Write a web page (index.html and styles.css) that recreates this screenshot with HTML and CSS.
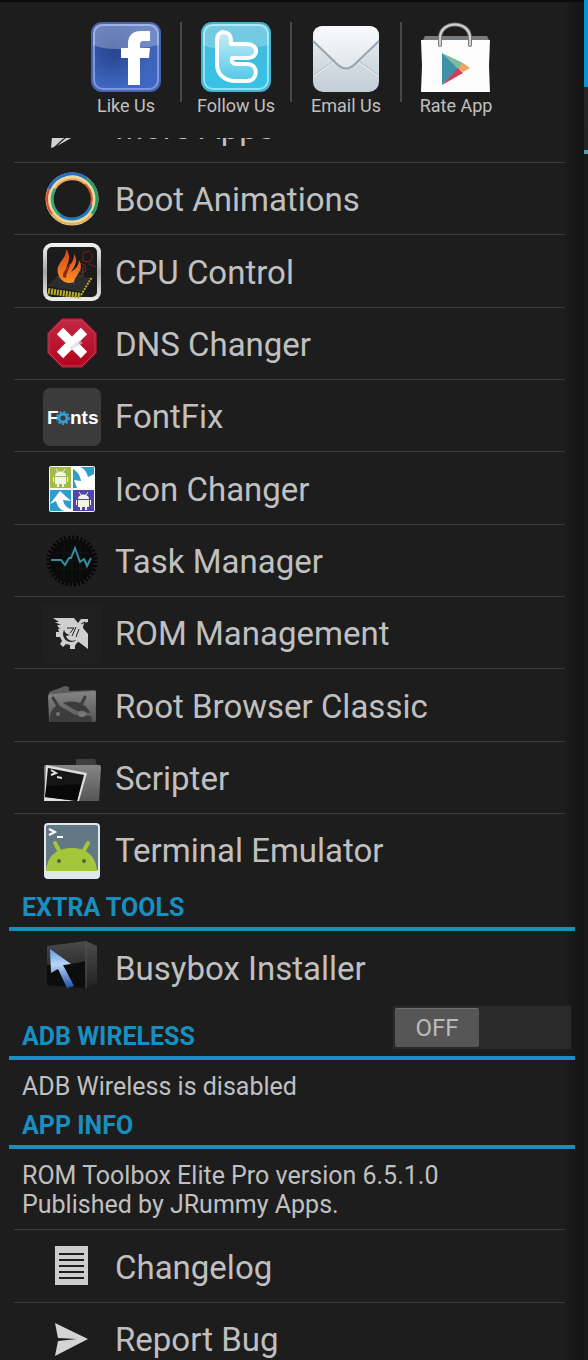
FILE: index.html
```html
<!DOCTYPE html>
<html lang="en">
<head>
  <meta charset="UTF-8">
  <meta name="viewport" content="width=device-width, initial-scale=1.0">
  <title>ROM Toolbox</title>
  <link rel="stylesheet" href="styles.css">
</head>
<body>
  <div class="drawer">
    <nav class="social">
      <a href="#like">
        <svg viewBox="0 0 72 72">
          <defs>
            <linearGradient id="fb" x1="0" y1="0" x2="0" y2="1"><stop offset="0" stop-color="#3d5fae"/><stop offset="1" stop-color="#3f68c4"/></linearGradient>
            <radialGradient id="fbDark" cx=".3" cy=".4" r=".6"><stop offset="0" stop-color="#27458f"/><stop offset="1" stop-color="#27458f" stop-opacity="0"/></radialGradient>
          </defs>
          <rect x="1" y="0" width="70" height="70" rx="11" fill="#4664ae"/>
          <rect x="4" y="3" width="64" height="64" rx="9" fill="url(#fb)" stroke="#7c98da" stroke-width="2"/>
          <rect x="5" y="4" width="62" height="62" rx="7" fill="url(#fbDark)"/>
          <path d="M3 11Q3 2 12 2H60Q69 2 69 11V23Q46 28 26 27Q12 27 3 23Z" fill="#fff" opacity=".27"/>
          <path d="M38 63V36H31V26H38V22C38 13 43 9 51 9H60V19H54C51 19 50 20 50 23V26H60L59 36H50V63Z" fill="#fff"/>
        </svg>
        Like Us
      </a>
      <a href="#follow">
        <svg viewBox="0 0 72 72">
          <defs>
            <linearGradient id="tw" x1="0" y1="0" x2="0" y2="1"><stop offset="0" stop-color="#49b8d6"/><stop offset="1" stop-color="#35c3e6"/></linearGradient>
            <linearGradient id="twT" x1="0" y1="0" x2="0" y2="1"><stop offset="0" stop-color="#c8edf8"/><stop offset="1" stop-color="#52c8e8"/></linearGradient>
          </defs>
          <rect x="1" y="0" width="70" height="70" rx="11" fill="#45b3cf"/>
          <rect x="4" y="3" width="64" height="64" rx="9" fill="url(#tw)" stroke="#8fe3f5" stroke-width="2"/>
          <path d="M3 11Q3 2 12 2H60Q69 2 69 11V23Q46 28 26 27Q12 27 3 23Z" fill="#fff" opacity=".25"/>
          <path d="M17 18C17 7 31 8 31 18V22H47C59 22 59 36 48 36H32C31 40 33 42 37 42H48C59 43 58 59 47 59H36C24 59 17 52 17 42Z" fill="url(#twT)" stroke="#fff" stroke-width="4" stroke-linejoin="round"/>
        </svg>
        Follow Us
      </a>
      <a href="#email">
        <svg viewBox="0 0 72 72">
          <defs>
            <linearGradient id="mail" x1="0" y1="0" x2="0" y2="1"><stop offset="0" stop-color="#e9eef3"/><stop offset="1" stop-color="#c4ced6"/></linearGradient>
            <linearGradient id="flap" x1="0" y1="0" x2="0" y2="1"><stop offset="0" stop-color="#fafbfd"/><stop offset="1" stop-color="#dfe6ec"/></linearGradient>
          </defs>
          <rect x="3" y="4" width="66" height="66" rx="10" fill="url(#mail)"/>
          <path d="M4 53L25 38M68 53L47 38" stroke="#a9b4bd" stroke-width="1"/>
          <path d="M4 54L25 39M68 54L47 39" stroke="#f0f4f7" stroke-width="1"/>
          <path d="M3 19L28 43Q36 50 44 43L69 19" fill="none" stroke="#9aa5ae" stroke-width="2"/>
          <path d="M3 17V14Q3 4 13 4H59Q69 4 69 14V17L43 42Q36 48 29 42Z" fill="url(#flap)"/>
        </svg>
        Email Us
      </a>
      <a href="#rate">
        <svg viewBox="0 0 72 72">
          <path d="M3 18L5 14H67L69 18Z" fill="#777b7e"/>
          <path d="M1 18H70L69 44L70 70H1L2 44Z" fill="#fcfcfd"/>
          <path d="M20 23V16C20 -2 50 -2 50 16V23" fill="none" stroke="#777" stroke-width="4" stroke-linecap="round"/>
          <path d="M20 23V16C20 -2 50 -2 50 16V23" fill="none" stroke="#d2d2d2" stroke-width="2" stroke-linecap="round"/>
          <path d="M22 31V63L39 46Z" fill="#3d91a9"/>
          <path d="M22 31L43 41L38 47Z" fill="#79bd9a"/>
          <path d="M43 41L50 46L43 50L38 46Z" fill="#efa360"/>
          <path d="M22 63L43 51L38 46Z" fill="#c8405a"/>
        </svg>
        Rate App
      </a>
    </nav>

    <main class="content">
      <ul class="tools scrolled">
        <li><a href="#more-apps">
          <svg viewBox="0 0 58 58"><path d="M9 8L42 29L18 42L26 34L9 39Z" fill="#d0d0d0"/><path d="M9 39H22L11 49L8 50ZM24 39H30L14 48Z" fill="#d0d0d0"/></svg>
          More Apps
        </a></li>
        <li><a href="#boot-animations">
          <svg viewBox="0 0 58 58">
            <g fill="none">
              <circle cx="29" cy="28" r="23" stroke="#e7d9a0" stroke-width="7"/>
              <path d="M6 18A25 25 0 0 1 44 8" stroke="#2a6ec0" stroke-width="3"/>
              <path d="M44 8A25 25 0 0 1 49 43" stroke="#289a66" stroke-width="3"/>
              <path d="M49 43A25 25 0 0 1 9 43" stroke="#e9aa4c" stroke-width="2"/>
              <path d="M9 43A25 25 0 0 1 6 18" stroke="#d84a32" stroke-width="2"/>
              <path d="M12 18A20 20 0 0 1 42 13" stroke="#f3a25c" stroke-width="2"/>
              <path d="M42 13A20 20 0 0 1 48 34" stroke="#d9582f" stroke-width="2"/>
              <path d="M48 34A20 20 0 0 1 17 44" stroke="#2879ba" stroke-width="3"/>
              <path d="M17 44A20 20 0 0 1 12 18" stroke="#35a873" stroke-width="3"/>
            </g>
          </svg>
          Boot Animations
        </a></li>
        <li><a href="#cpu-control">
          <svg viewBox="0 0 58 58">
            <defs>
              <linearGradient id="steel" x1="0" y1="0" x2="0" y2="1"><stop offset="0" stop-color="#f4f4f4"/><stop offset=".5" stop-color="#a2a5a8"/><stop offset="1" stop-color="#eee"/></linearGradient>
              <linearGradient id="fire" x1="0" y1="0" x2="0" y2="1"><stop offset="0" stop-color="#d1401b"/><stop offset="1" stop-color="#fb8f26"/></linearGradient>
            </defs>
            <rect width="58" height="58" rx="9" fill="url(#steel)"/>
            <rect x="4" y="4" width="50" height="50" rx="5" fill="#1b1b1b"/>
            <path d="M4 43L17 31L48 35L38 49Z" fill="#2c2c2c"/>
            <path d="M40 10L46 8L50 13L47 19L40 18ZM36 20L42 22L43 28L38 30ZM46 21L53 24" fill="none" stroke="#712020"/>
            <path d="M14 34H22V39H31V42M40 24V33H34" fill="none" stroke="#4a4a4a"/>
            <path d="M5 48L38 53" stroke="#b8ad2a" stroke-width="6" stroke-dasharray="2 1"/>
            <path d="M38 52L49 34" stroke="#b8ad2a" stroke-width="2" stroke-dasharray="2 1"/>
            <path d="M16 33C10 21 24 17 23 6C28 12 26 19 23 25C29 21 31 17 31 11C36 18 31 24 28 29C33 26 36 22 36 17C42 27 32 32 31 39C26 41 19 40 16 33Z" fill="url(#fire)"/>
            <path d="M20 34C19 28 26 24 27 19C28 25 23 29 23 35Z" fill="#8e2b12"/>
          </svg>
          CPU Control
        </a></li>
        <li><a href="#dns-changer">
          <svg viewBox="0 0 58 58">
            <defs><linearGradient id="stop" x1="0" y1="0" x2="0" y2="1"><stop offset="0" stop-color="#c12843"/><stop offset="1" stop-color="#b5041e"/></linearGradient></defs>
            <path d="M19 2H39L54 17V37L39 52H19L4 37V17Z" fill="#891729"/>
            <path d="M19 4H39L52 17V37L39 50H19L6 37V17Z" fill="url(#stop)" stroke="#b8475a"/>
            <path d="M17 15L41 39M41 15L17 39" stroke="#fff" stroke-width="9"/>
            <path d="M25 33L36 24L40 27L30 33Z" fill="#d9d3e8" opacity=".6"/>
          </svg>
          DNS Changer
        </a></li>
        <li><a href="#fontfix">
          <svg viewBox="0 0 58 58">
            <rect width="58" height="58" rx="7" fill="#3b3b3b"/>
            <text class="fonts-logo" x="4" y="36">F</text>
            <text class="fonts-logo" x="27" y="36">nts</text>
            <circle cx="20" cy="30" r="4" fill="none" stroke="#2f9fd8" stroke-width="3"/>
            <circle cx="20" cy="30" r="6" fill="none" stroke="#2f9fd8" stroke-width="2" stroke-dasharray="2 2"/>
          </svg>
          FontFix
        </a></li>
        <li><a href="#icon-changer">
          <svg viewBox="0 0 58 58">
            <rect x="6" y="6" width="46" height="46" rx="2" fill="#f5f7f8"/>
            <path d="M7 7H28V28H7Z" fill="#a5bb48"/>
            <path d="M30 7H51V28H30ZM7 30H28V51H7Z" fill="#2d9dcc"/>
            <path d="M30 30H51V51H30Z" fill="#5343ae"/>
            <path d="M30 7H37C42 9 44 13 45 17L51 14V28H34L31 20L38 21C37 15 34 11 30 9ZM28 51H21C16 49 14 45 13 41L7 44L17 31L28 41L20 40C21 45 24 48 28 49Z" fill="#fff"/>
            <g id="droid" fill="#f1f4e6">
              <path d="M12 16C12 10 23 10 23 16ZM12 17H23V24H12ZM10 17H11V22H10ZM24 17H25V22H24ZM14 24H16V27H14ZM19 24H21V27H19Z"/>
              <path d="M13 9L15 12M22 9L20 12" stroke="#f1f4e6"/>
            </g>
            <use href="#droid" x="23" y="23"/>
          </svg>
          Icon Changer
        </a></li>
        <li><a href="#task-manager">
          <svg viewBox="0 0 58 58">
            <circle cx="29" cy="28" r="23" fill="none" stroke="#060606" stroke-width="5" stroke-dasharray="2 2"/>
            <circle cx="29" cy="28" r="22" fill="#0a0a0b"/>
            <path d="M12 20H46M10 28H48M12 36H46M21 10V46M29 8V48M37 10V46" stroke="#111719"/>
            <path d="M8 27H18L22 32L26 25H28L32 15L37 29L41 26L44 33L48 25" fill="none" stroke="#348c9f" stroke-width="2"/>
          </svg>
          Task Manager
        </a></li>
        <li><a href="#rom-management">
          <svg viewBox="0 0 58 58">
            <rect width="58" height="58" fill="#202020"/>
            <path d="M15 24L18 23L19 20H35V37L33 39L32 41V44H27V40L23 39L20 42L17 39L19 36L17 32H13V27H16Z" fill="#cfcfcf"/>
            <circle cx="28" cy="29" r="8" fill="#202020"/>
            <path d="M10 13H31L35 18L38 14H45V44L33 35C29 37 24 35 23 31L27 30C23 29 21 27 21 23H16L14 20H18L12 17H16Z" fill="#cfcfcf"/>
            <path d="M24 23H31L27 28M33 22L29 31M36 24L33 32M38 19L42 17L41 22L45 26" fill="none" stroke="#202020" stroke-width="1"/>
            <path d="M41 18L45 17V29L40 23Z" fill="#202020"/>
          </svg>
          ROM Management
        </a></li>
        <li><a href="#root-browser">
          <svg viewBox="0 0 58 58">
            <defs><linearGradient id="folder" x1="0" y1="0" x2="0" y2="1"><stop offset="0" stop-color="#858585"/><stop offset="1" stop-color="#565656"/></linearGradient></defs>
            <path d="M6 15L22 9L26 10V14L52 13Q53 13 53 15V43Q53 45 51 45H8Q6 45 6 43Z" fill="#5c5c5c"/>
            <path d="M5 19Q5 17 7 17L51 14Q53 14 53 16L52 43Q52 45 50 45H8Q6 45 6 43Z" fill="url(#folder)"/>
            <path d="M7 45C6 37 9 31 15 28L32 38L48 39Q49 41 49 45Z" fill="#3c3c3c"/>
            <path d="M20 26C32 22 44 27 47 36L34 34Z" fill="#3c3c3c"/>
            <path d="M10 21L15 29M42 20L38 28" stroke="#3c3c3c" stroke-width="3" stroke-linecap="round"/>
            <circle cx="15" cy="37" r="2" fill="#777"/><ellipse cx="39" cy="37" rx="4" ry="3" fill="#777"/>
          </svg>
          Root Browser Classic
        </a></li>
        <li><a href="#scripter">
          <svg viewBox="0 0 58 58">
            <path d="M33 15V10Q33 9 34 9H52L54 15Z" fill="#3f3f3f"/>
            <path d="M1 17Q1 15 3 15H56Q58 15 58 17L56 51H2Z" fill="url(#folder)"/>
            <path d="M3 15L44 23L36 51H1Z" fill="#ddd"/>
            <path d="M5 18L41 25L34 51L2 47Z" fill="#151515"/>
            <path d="M4 36L38 34L34 51L2 47Z" fill="#080808"/>
            <path d="M8 20L13 23L8 25M14 27L19 28" fill="none" stroke="#ddd" stroke-width="2"/>
          </svg>
          Scripter
        </a></li>
        <li><a href="#terminal">
          <svg viewBox="0 0 58 58">
            <rect x="1" y="1" width="56" height="56" rx="4" fill="#dfe6ec"/>
            <rect x="3" y="3" width="52" height="46" rx="2" fill="#637885"/>
            <path d="M3 49C4 32 16 26 29 26S53 33 54 49Z" fill="#a4c639"/>
            <path d="M12 21L17 30M45 21L40 30" stroke="#a4c639" stroke-width="4" stroke-linecap="round"/>
            <circle cx="16" cy="39" r="2" fill="#52652a"/><circle cx="41" cy="39" r="2" fill="#52652a"/>
            <path d="M6 7L12 10L6 13M14 15H20" fill="none" stroke="#fff" stroke-width="2"/>
          </svg>
          Terminal Emulator
        </a></li>
      </ul>

      <h2 class="section-title">EXTRA TOOLS</h2>
      <ul class="tools">
        <li><a href="#busybox">
          <svg viewBox="0 0 58 58">
            <defs>
              <linearGradient id="box" x1="0" y1="0" x2="0" y2="1"><stop offset="0" stop-color="#4a4a4b"/><stop offset="1" stop-color="#141414"/></linearGradient>
              <linearGradient id="side" x1="0" y1="0" x2="0" y2="1"><stop offset="0" stop-color="#4c4c4c"/><stop offset="1" stop-color="#222"/></linearGradient>
              <linearGradient id="arrow" x1="0" y1="0" x2="0" y2="1"><stop offset="0" stop-color="#5f9ae6"/><stop offset=".4" stop-color="#bcd6f8"/><stop offset="1" stop-color="#1c4fa8"/></linearGradient>
            </defs>
            <path d="M4 7L43 2V49L4 46Z" fill="url(#box)"/>
            <path d="M43 2L54 7V44L43 49Z" fill="url(#side)"/>
            <path d="M4 26Q26 27 42 22V49L4 46Z" fill="#0d0d0e"/>
            <path d="M43 2V49" stroke="#555"/>
            <path d="M7 10L28 25L20 26L31 47L24 49L15 30L8 34Z" fill="url(#arrow)"/>
          </svg>
          Busybox Installer
        </a></li>
      </ul>

      <div class="section-title with-switch">
        <h2 id="adbTitle">ADB WIRELESS</h2>
        <button type="button" class="switch" role="switch" aria-checked="false" aria-labelledby="adbTitle"><span>OFF</span></button>
      </div>
      <p>ADB Wireless is disabled</p>

      <h2 class="section-title">APP INFO</h2>
      <p>ROM Toolbox Elite Pro version 6.5.1.0<br>Published by JRummy Apps.</p>
      <ul class="tools ruled">
        <li><a href="#changelog">
          <svg viewBox="0 0 58 58"><path d="M12 8H45V47H12Z" fill="#cdcdcd"/><path d="M16 16H41M16 22H41M16 28H41M16 34H41M16 40H41" stroke="#1e1e1e" stroke-width="2"/></svg>
          Changelog
        </a></li>
        <li><a href="#report-bug">
          <svg viewBox="0 0 58 58"><path d="M12 12L45 28L12 45L15 30L34 28L15 27Z" fill="#d4d4d4"/></svg>
          Report Bug
        </a></li>
      </ul>
    </main>
  </div>
  <div class="page-edge"></div>
</body>
</html>
```
FILE: styles.css
```css
* {
  box-sizing: border-box;
}
body {
  display: flex;
  height: 100vh;
  margin: 0;
  overflow: hidden;
  background-color: #1d1d1d;
  color: #c0c0c0;
  font-family: Roboto, sans-serif;
  font-size: 25px;
  line-height: 29px;
}
a {
  color: inherit;
  text-decoration: none;
}
.drawer {
  flex: 1;
  display: flex;
  flex-direction: column;
  border-top: 2px solid #0b0b0b;
  background: linear-gradient(to left, #131313, #1d1d1d 20px);
}

/* top links */
.social {
  display: flex;
  justify-content: center;
  padding: 20px 2px 20px 0;
}
.social a {
  position: relative;
  display: flex;
  flex-direction: column;
  align-items: center;
  width: 110px;
  font-size: 18px;
  line-height: 24px;
}
.social a + a::before {
  content: "";
  position: absolute;
  left: -1px;
  top: 0;
  width: 2px;
  height: 80px;
  background-color: #484848;
}
.social svg {
  width: 72px;
  height: 72px;
}

/* scrolling list */
.content {
  flex: 1;
  min-height: 0;
  overflow: hidden;
  padding: 0 9px;
}
.tools {
  list-style: none;
  margin: 0 10px 0 5px;
  padding: 0;
}
.tools.scrolled {
  margin-top: -48px;
  margin-bottom: 8px;
}
.tools.ruled {
  border-top: 1px solid #3b3b3b;
}
.tools a {
  display: flex;
  align-items: center;
  gap: 14px;
  height: 72px;
  padding: 2px 0 0 29px;
  font-size: 33px;
}
.tools li:nth-child(3n) a {
  height: 73px;
}
.tools li + li a {
  border-top: 1px solid #3b3b3b;
}
.tools svg {
  width: 58px;
  height: 58px;
}
.fonts-logo {
  fill: #fff;
  font-family: "Liberation Sans", sans-serif;
  font-size: 19px;
  font-weight: bold;
}

.section-title {
  margin: 0;
  padding: 0 13px 5px;
  border-bottom: 4px solid #198fc0;
  color: #198fc0;
  font-size: 25px;
  font-weight: bold;
}
.with-switch {
  display: flex;
  justify-content: space-between;
  align-items: flex-end;
  padding: 3px 4px 5px 13px;
}
.with-switch h2 {
  margin: 0;
  font-size: 25px;
}
.content p {
  margin: 0;
  padding: 12px 13px 10px;
}

.switch {
  width: 178px;
  height: 43px;
  margin-bottom: 2px;
  padding: 2px;
  border: 0;
  background-color: #2a2a2a;
  color: #bbb;
  font-family: inherit;
  font-size: 24px;
  text-align: left;
}
.switch span {
  display: block;
  width: 84px;
  border-top: 1px solid #707070;
  border-radius: 2px;
  background-color: #565656;
  line-height: 38px;
  text-align: center;
}

/* strip of the page beside the drawer */
.page-edge {
  width: 4px;
  background: linear-gradient(#0796cc 87px, #262626 87px, #222 150px, #4aa3b5 150px, #4aa3b5 154px, #191919 154px);
}
```
